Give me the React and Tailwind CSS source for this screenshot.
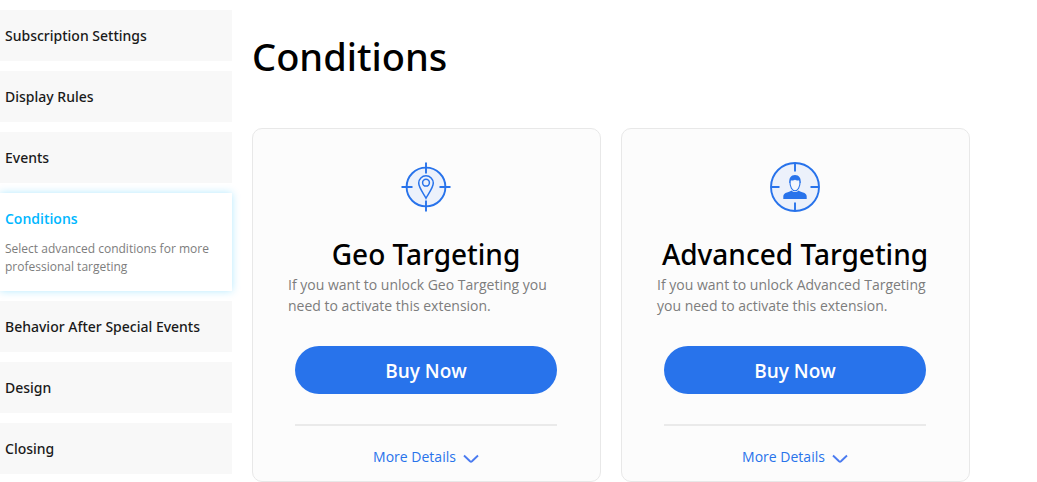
const SECTIONS = [
  { title: "Subscription Settings" },
  { title: "Display Rules" },
  { title: "Events" },
  {
    title: "Conditions",
    description: "Select advanced conditions for more professional targeting",
    active: true,
  },
  { title: "Behavior After Special Events" },
  { title: "Design" },
  { title: "Closing" },
];

function GeoIcon() {
  return (
    <svg viewBox="0 0 50 50" className="size-[50px]" fill="none" stroke="#2873eb" strokeWidth="1.9" aria-hidden="true">
      <circle cx="25" cy="25" r="19.4" fill="#ecf1fb" />
      <path d="M25 0.5v11M25 38.5v11M0.5 25h11M38.5 25h11" strokeWidth="1.9" />
      <path d="M25 36.2c-1.6-3.400-7.300-10.300-7.300-15.100a7.300 7.300 0 0 1 14.600 0c0 4.800-5.700 11.700-7.300 15.100z" strokeWidth="1.5" />
      <circle cx="25" cy="20.700" r="3.400" strokeWidth="1.5" />
    </svg>
  );
}

function AdvancedIcon() {
  return (
    <svg viewBox="0 0 50 50" className="size-[50px]" fill="none" stroke="#2873eb" strokeWidth="1.9" aria-hidden="true">
      <circle cx="25" cy="25" r="24" fill="#ecf1fb" />
      <path d="M25 1v8.500M25 40.500v8.500M1 25h8.500M40.500 25h8.500" />
      <path
        d="M13.300 37v-2.500c0-2.300 1.500-3.400 3.700-4.100 2-.6 3.700-1 4.500-1.800 1 1 2.200 1.500 3.500 1.500s2.500-.5 3.500-1.500c.8.8 2.500 1.200 4.500 1.800 2.200.7 3.700 1.800 3.700 4.100V37z"
        fill="#2873eb"
        stroke="none"
      />
      <path d="M19.900 19.500c0 5.600 2.300 9.300 5.100 9.300s5.100-3.700 5.100-9.300" fill="#f4f7fd" strokeWidth="1.1" />
      <path
        d="M19.400 21c-.7-5 1.600-8 5.600-8s6.300 3 5.600 8h-.8l-.8-2.700c-1.500.4-3 .2-4-.6-1.100.8-2.700 1-4 .6l-.8 2.700z"
        fill="#2873eb"
        stroke="none"
      />
    </svg>
  );
}

function SectionLink({ title, description, active }) {
  return (
    <li>
      <a
        href="#"
        aria-current={active ? "page" : undefined}
        className={
          active
            ? "block bg-white px-[5px] pt-4 pb-[15px] shadow-[0_0_8px_rgba(0,183,255,0.3)]"
            : "block bg-[#f8f8f8] px-[5px] py-4"
        }
      >
        <span
          className={
            active
              ? "block text-sm leading-[19px] font-semibold text-[#00b7ff]"
              : "block font-['Noto_Sans','Open_Sans',sans-serif] text-sm leading-[19px] font-medium text-[#1a1a1a]"
          }
        >
          {title}
        </span>
        {description && (
          <span className="mt-3 block text-xs leading-[18px] text-[#7d7d7d]">{description}</span>
        )}
      </a>
    </li>
  );
}

function ExtensionCard({ icon, name }) {
  return (
    <article className="min-w-0 flex-1 rounded-[10px] border border-[#e8e8e8] bg-[#fcfcfc] pt-[33px] pr-9 pb-3 pl-[35px]">
      <div className="flex justify-center">{icon}</div>
      <h2 className="mt-[22px] text-center font-['Noto_Sans','Open_Sans',sans-serif] text-[28px] leading-[40px] font-medium whitespace-nowrap text-black">
        {name}
      </h2>
      <p className="text-sm leading-[21px] text-[#7d7d7d]">
        If you want to unlock {name} you need to activate this extension.
      </p>
      <div className="mt-[30px] px-[7px]">
        <button type="button" className="h-12 w-full rounded-full bg-[#2873eb] pt-0.5 text-[19px] font-semibold text-white">
          Buy Now
        </button>
        <hr className="mt-[30px] border-t-2 border-[#eaeaea]" />
        <button
          type="button"
          className="mx-auto mt-[19px] flex items-center gap-[7px] text-sm leading-6 text-[#2873eb]"
        >
          More Details
          <svg viewBox="0 0 16 10" className="mt-1 h-[10px] w-4" fill="none" stroke="#4a7bf0" strokeWidth="1.9" aria-hidden="true">
            <path d="M1 1.500l6 5.800q1 .8 2 0l6-5.800" />
          </svg>
        </button>
      </div>
    </article>
  );
}

export default function App() {
  return (
    <div className="flex items-start gap-5 bg-white font-['Open_Sans','Noto_Sans',sans-serif]">
      <nav aria-label="Popup settings" className="w-58 shrink-0 pt-[10px]">
        <ul className="flex flex-col gap-[10px]">
          {SECTIONS.map((section) => (
            <SectionLink key={section.title} {...section} />
          ))}
        </ul>
      </nav>
      <main className="max-w-[718px] min-w-0 flex-1 pt-8">
        <h1 className="font-['Noto_Sans','Open_Sans',sans-serif] text-[38px] leading-[48px] font-medium text-black">
          Conditions
        </h1>
        <div className="mt-12 flex gap-5">
          <ExtensionCard icon={<GeoIcon />} name="Geo Targeting" />
          <ExtensionCard icon={<AdvancedIcon />} name="Advanced Targeting" />
        </div>
      </main>
    </div>
  );
}
